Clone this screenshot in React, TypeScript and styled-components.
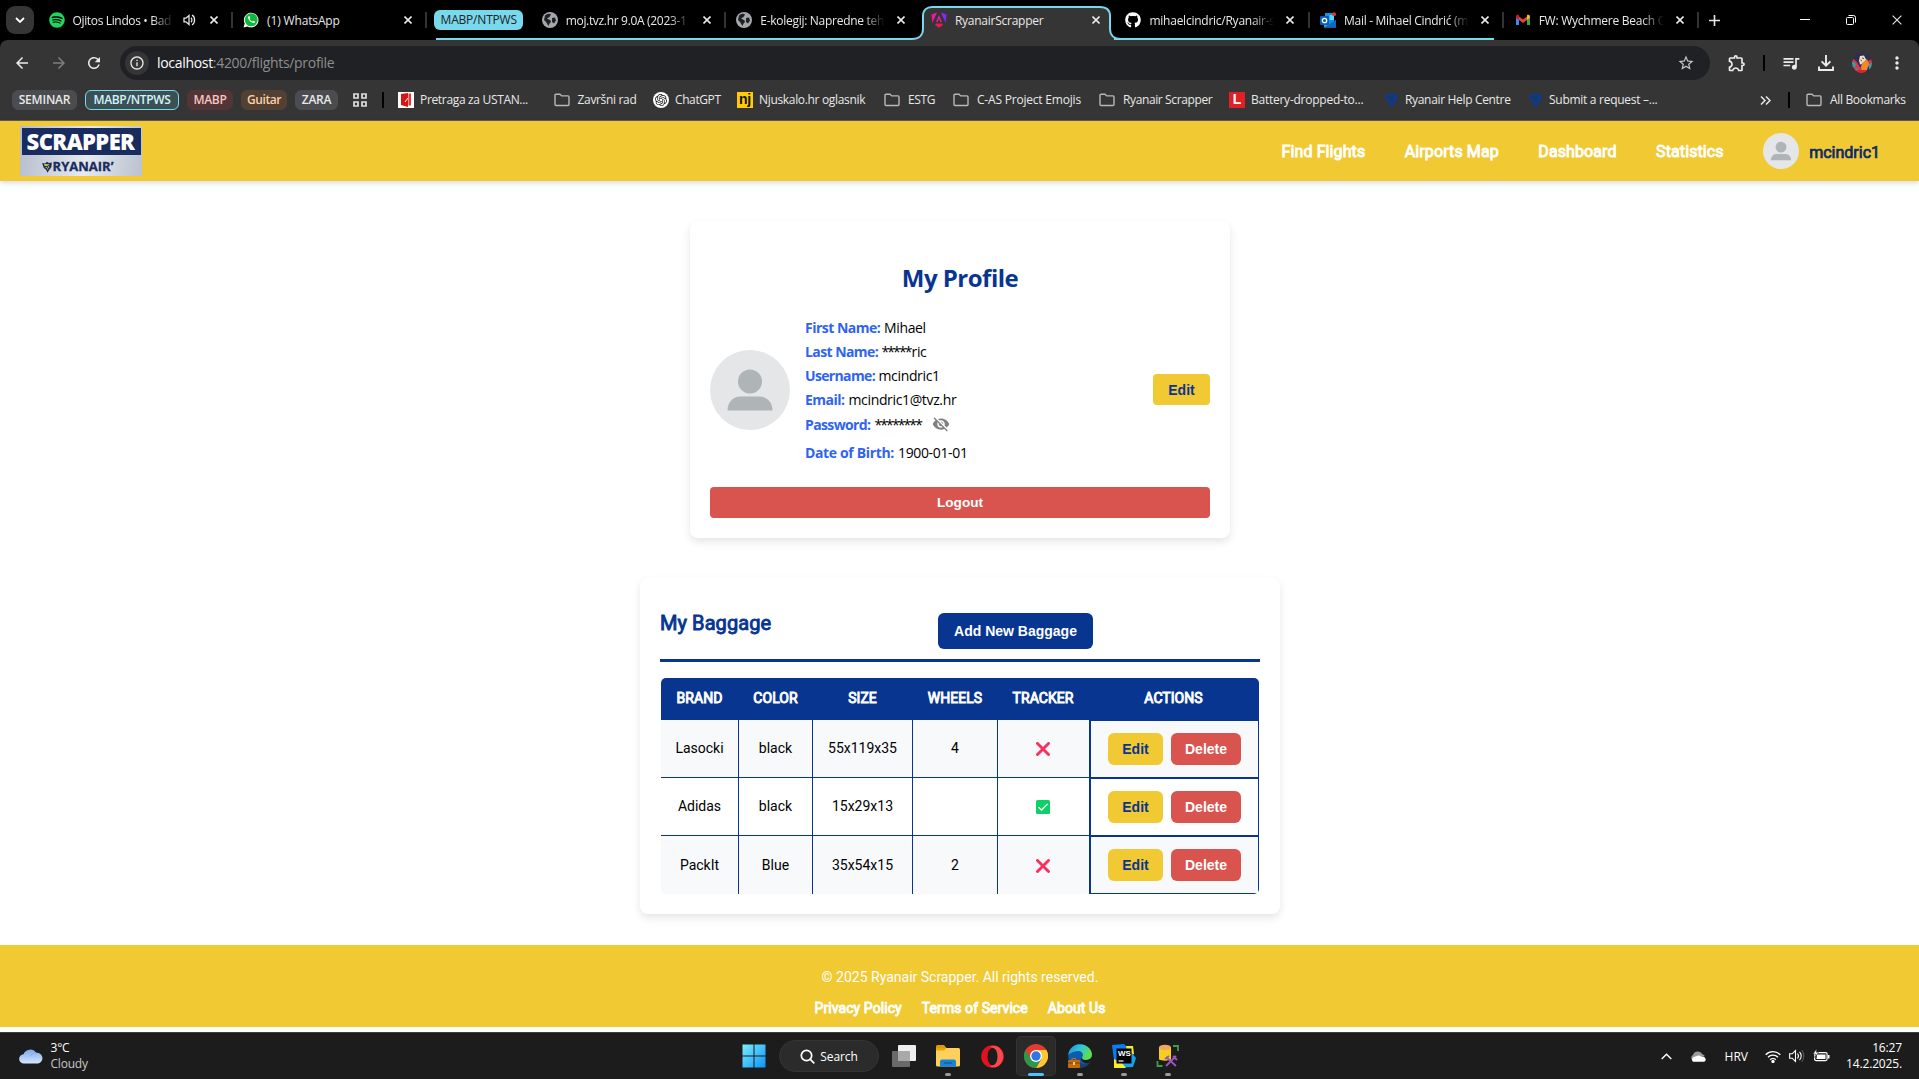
import React from "react";
import styled, { createGlobalStyle, css } from "styled-components";
import { FaSpotify, FaGithub } from "react-icons/fa6";
import {
  MdVisibilityOff, MdArrowBack, MdArrowForward, MdRefresh, MdStarOutline, MdOutlineExtension,
  MdQueueMusic, MdMoreVert, MdOutlineInfo,
} from "react-icons/md";
import { SiOpenai } from "react-icons/si";

const UI = `"Open Sans", "Noto Sans", sans-serif`;
const ROBOTO = `Roboto, "Liberation Sans", sans-serif`;
const ARIAL = `"Liberation Sans", Arial, sans-serif`;
const BLUE = "#073590";
const YELLOW = "#f1c933";
const RED = "#d9534f";
const CYAN = "#78d9ec";

const Global = createGlobalStyle`
  *, *::before, *::after { box-sizing: border-box; }
  html, body { margin: 0; padding: 0; background: #fff; overflow: hidden; }
  svg { display: block; flex: none; }
`;

const Screen = styled.div`
  width: 1919px;
  height: 1079px;
  display: flex;
  flex-direction: column;
  overflow: hidden;
  font-family: ${UI};
`;

/* ---------- Browser tabs ---------- */
const TabStrip = styled.div`
  height: 40px;
  flex: none;
  background: #000;
  display: flex;
  align-items: stretch;
`;
const TabSearch = styled.div`
  width: 28px;
  height: 28px;
  margin: 6px 3px 0 6px;
  border-radius: 9px;
  background: #353535;
  display: flex;
  align-items: center;
  justify-content: center;
`;
const TabBox = styled.div<{ $group?: boolean; $line?: number; $sep?: boolean }>`
  position: relative;
  width: 194.6px;
  flex: none;
  display: flex;
  align-items: center;
  padding-left: 11.5px;
  ${(p) => p.$group && css`
    background: linear-gradient(${CYAN}, ${CYAN}) left bottom / ${p.$line ?? 195}px 2px no-repeat;
  `}
  ${(p) => p.$sep && css`
    &::after {
      content: "";
      position: absolute;
      right: -1px;
      top: 12px;
      width: 2px;
      height: 16px;
      background: #333;
    }
  `}
`;
const TabIcon = styled.div`
  width: 16px;
  height: 16px;
  flex: none;
  position: relative;
`;
const TabTitle = styled.div<{ $w: number; $fade?: boolean; $ls?: number }>`
  position: relative;
  width: ${(p) => p.$w}px;
  margin-left: 8px;
  padding-top: 1px;
  overflow: hidden;
  white-space: nowrap;
  color: #e8e8e8;
  font-size: 12px;
  line-height: 18px;
  letter-spacing: ${(p) => p.$ls ?? -0.3}px;
  ${(p) => p.$fade && css`mask-image: linear-gradient(90deg, #000 calc(100% - 22px), transparent);`}
`;
const TabClose = styled.div`
  width: 16px;
  margin-left: 8px;
  position: relative;
  display: flex;
  justify-content: center;
`;
const GroupSlot = styled.div`
  width: 104px;
  flex: none;
  padding: 10px 7px 0 8px;
  background: linear-gradient(${CYAN}, ${CYAN}) right bottom / 94px 2px no-repeat;
`;
const GroupLabel = styled.div`
  height: 20px;
  border-radius: 6px;
  background: ${CYAN};
  color: #202124;
  font-size: 12px;
  line-height: 19px;
  letter-spacing: -0.2px;
  text-align: center;
`;
const ActiveShape = styled.svg`
  position: absolute;
  left: -7px;
  top: 5px;
`;
const NewTab = styled.div`
  width: 34px;
  display: flex;
  align-items: center;
  justify-content: center;
`;
const WindowButtons = styled.div`
  margin-left: auto;
  margin-right: -1px;
  display: flex;
  align-items: center;
`;
const WindowButton = styled.div`
  width: 46px;
  display: flex;
  justify-content: center;
`;

/* ---------- Toolbar ---------- */
const ChromeBody = styled.div`
  flex: none;
  height: 81px;
  background: #353535;
  border-radius: 8px 8px 0 0;
  border-bottom: 1px solid #5b5c5e;
`;
const ChromeBack = styled.div`
  background: #000;
  flex: none;
`;
const Toolbar = styled.div`
  height: 40px;
  padding-top: 6px;
  padding-left: 2px;
  display: flex;
`;
const ToolIcon = styled.div<{ $w: number; $dim?: boolean }>`
  width: ${(p) => p.$w}px;
  height: 34px;
  flex: none;
  display: flex;
  align-items: center;
  justify-content: center;
  font-size: 18px;
  color: ${(p) => (p.$dim ? "#7e7e7e" : "#ececec")};
`;
const Omnibox = styled.div`
  width: 1590px;
  height: 34px;
  border-radius: 17px;
  background: #202124;
  display: flex;
  align-items: center;
  padding: 0 15px 0 5px;
  color: #9aa0a6;
`;
const InfoDot = styled.div`
  width: 24px;
  height: 24px;
  border-radius: 50%;
  background: #353535;
  color: #e8e8e8;
  display: flex;
  align-items: center;
  justify-content: center;
  font-size: 16px;
  margin-right: 8px;
`;
const Url = styled.div`
  flex: 1;
  font-size: 14px;
  line-height: 20px;
  letter-spacing: -0.31px;
  color: #8e8e8e;
  b { font-weight: 400; color: #fff; }
`;
const Divider = styled.div<{ $ml?: number; $mr?: number }>`
  width: 2px;
  height: 16px;
  align-self: center;
  flex: none;
  background: #000;
  margin-left: ${(p) => p.$ml ?? 0}px;
  margin-right: ${(p) => p.$mr ?? 0}px;
`;

const Bookmarks = styled.div`
  height: 40px;
  display: flex;
  align-items: center;
  padding: 0 13px 0 12px;
`;
const Chip = styled.div<{ $w: number; $bg: string; $fg: string; $bd?: string; $ls?: number }>`
  width: ${(p) => p.$w}px;
  height: 20px;
  margin-right: 8px;
  flex: none;
  border-radius: 6px;
  border: 1px solid ${(p) => p.$bd ?? p.$bg};
  background: ${(p) => p.$bg};
  color: ${(p) => p.$fg};
  font-size: 12px;
  font-weight: 600;
  letter-spacing: ${(p) => p.$ls ?? -0.35}px;
  line-height: 17px;
  text-align: center;
  white-space: nowrap;
`;
const Bookmark = styled.div<{ $w: number; $ls?: number; $gap?: number }>`
  width: ${(p) => p.$w}px;
  flex: none;
  display: flex;
  align-items: center;
  gap: ${(p) => p.$gap ?? 7}px;
  color: #e8e8e8;
  font-size: 12px;
  line-height: 18px;
  letter-spacing: ${(p) => p.$ls ?? -0.33}px;
  white-space: nowrap;
`;
const Tile = styled.div<{ $bg: string; $fg: string }>`
  width: 16px;
  height: 16px;
  flex: none;
  background: ${(p) => p.$bg};
  color: ${(p) => p.$fg};
  font: 700 14px/14px ${ARIAL};
  text-align: center;
`;
const RoundTile = styled.div`
  width: 16px;
  height: 16px;
  border-radius: 50%;
  background: #fff;
  color: #222;
  display: flex;
  align-items: center;
  justify-content: center;
  font-size: 12px;
`;

/* ---------- Site header ---------- */
const faux = css`
  -webkit-text-stroke: 0.9px currentColor;
  font-weight: 400;
`;
const SiteHeader = styled.header`
  height: 60px;
  flex: none;
  background: ${YELLOW};
  box-shadow: 0 2px 5px rgba(0, 0, 0, 0.15);
  display: flex;
  align-items: center;
  padding: 0 39px 0 20px;
  font-family: ${ROBOTO};
  position: relative;
`;
const Logo = styled.div`
  width: 122px;
  height: 50px;
  padding: 2px 1px 1px 2px;
  background: linear-gradient(100deg, #b4bccb, #e6e9ee 55%, #bac2cf);
  display: flex;
  flex-direction: column;
`;
const LogoTop = styled.div`
  height: 27px;
  padding-right: 2px;
  background: #182c60;
  color: #fff;
  font: 800 22px/26px "Open Sans", sans-serif;
  letter-spacing: -0.6px;
  text-align: center;
`;
const LogoBottom = styled.div`
  flex: 1;
  display: flex;
  align-items: center;
  justify-content: center;
  padding-top: 3px;
  padding-right: 9px;
  color: #182c60;
  font: 700 13px/15px "Open Sans", sans-serif;
  -webkit-text-stroke: 0.3px #182c60;
`;
const Nav = styled.nav`
  margin-left: auto;
  display: flex;
  align-items: center;
  gap: 39.5px;
`;
const NavLink = styled.a`
  ${faux}
  color: #fff;
  font-size: 16px;
  line-height: 20px;
  padding-top: 2px;
  letter-spacing: 0.1px;
`;
const User = styled.div`
  display: flex;
  align-items: center;
  gap: 10px;
  color: #0b2a6b;
  font-size: 16px;
  span { -webkit-text-stroke: 0.7px currentColor; padding-top: 2px; }
`;

/* ---------- Page ---------- */
const Page = styled.main`
  flex: none;
  height: 764px;
  display: flex;
  flex-direction: column;
  align-items: center;
  padding: 40px 0 0 1px;
`;
const Card = styled.section<{ $w: number; $h: number }>`
  width: ${(p) => p.$w}px;
  height: ${(p) => p.$h}px;
  background: #fff;
  border-radius: 8px;
  padding: 20px;
  box-shadow: 0 4px 8px rgba(0, 0, 0, 0.1);
  margin-bottom: 40px;
  display: flex;
  flex-direction: column;
`;
const ProfileTitle = styled.h2`
  margin: 20px 0 0;
  color: ${BLUE};
  font: 700 24px/34px ${UI};
  letter-spacing: -0.5px;
  text-align: center;
`;
const ProfileRow = styled.div`
  margin-top: 20px;
  height: 150px;
  display: flex;
  align-items: center;
`;
const Fields = styled.div`
  flex: 1;
  margin-left: 15px;
  font-size: 14px;
  height: 150px;
`;
const Field = styled.div<{ $h?: number }>`
  height: ${(p) => p.$h ?? 24}px;
  display: flex;
  align-items: center;
  color: #000;
  letter-spacing: -0.35px;
  white-space: nowrap;
`;
const Label = styled.b<{ $w: number; $ls?: number }>`
  width: ${(p) => p.$w}px;
  color: #2f63f2;
  letter-spacing: ${(p) => p.$ls ?? -0.5}px;
`;
const Stars = styled.span<{ $mr?: number }>`
  letter-spacing: -1.9px;
  margin-right: ${(p) => p.$mr ?? 2}px;
`;
const Button = styled.button<{ $w: number; $h: number; $bg: string; $fg: string; $r?: number; $size?: number }>`
  width: ${(p) => p.$w}px;
  height: ${(p) => p.$h}px;
  flex: none;
  border: 0;
  padding: 0;
  border-radius: ${(p) => p.$r ?? 6}px;
  background: ${(p) => p.$bg};
  color: ${(p) => p.$fg};
  font: 700 ${(p) => p.$size ?? 14}px/16px ${ARIAL};
`;
const EditSlot = styled.div`
  padding-bottom: 1px;
`;
const LogoutWrap = styled.div`
  margin-top: 22px;
`;
const BagHeader = styled.div`
  height: 64px;
  border-bottom: 3px solid ${BLUE};
  display: flex;
  align-items: flex-start;
  padding-top: 15px;
  h2 {
    ${faux}
    margin: -3px 0 0;
    width: 278px;
    color: ${BLUE};
    font-family: ${ROBOTO};
    font-size: 20px;
    line-height: 26px;
    letter-spacing: 0.08px;
  }
`;
const Table = styled.div`
  margin: 16px 1px 0;
  border-radius: 5px;
  overflow: hidden;
  display: flex;
  flex-direction: column;
  font: 400 14px/18px ${ROBOTO};
  color: #000;
`;
const Row = styled.div<{ $odd?: boolean }>`
  display: grid;
  grid-template-columns: 78px 74px 100px 85px 91px 170px;
  height: 58px;
  background: ${(p) => (p.$odd ? "#f8f9fb" : "#fff")};
`;
const HeadRow = styled(Row)`
  height: 42px;
  background: ${BLUE};
  color: #fff;
`;
const HeadCell = styled.div`
  ${faux}
  display: flex;
  align-items: center;
  justify-content: center;
  padding: 0 1px 2px 0;
  letter-spacing: 0.05px;
`;
const Cell = styled.div<{ $last?: boolean; $noRight?: boolean }>`
  display: flex;
  align-items: center;
  justify-content: center;
  padding-bottom: ${(p) => (p.$last || p.$noRight ? 0 : 2)}px;
  border-right: ${(p) => (p.$noRight ? 0 : 1)}px solid ${BLUE};
  border-bottom: ${(p) => (p.$last ? 0 : 1)}px solid ${BLUE};
  svg { margin-right: 1px; margin-top: ${(p) => (p.$last ? 2 : 0)}px; }
`;
const ActionCell = styled.div`
  display: flex;
  gap: 8px;
  padding: 12px 0 0 17px;
  border: 1px solid ${BLUE};
  border-left-width: 2px;
`;

/* ---------- Footer ---------- */
const Footer = styled.footer`
  height: 82px;
  flex: none;
  background: ${YELLOW};
  color: #fff;
  font: 400 14px/20px ${ROBOTO};
  display: flex;
  flex-direction: column;
  align-items: center;
  padding-top: 22px;
  padding-left: 1px;
`;
const FooterLinks = styled.div`
  margin-top: 11px;
  display: flex;
  gap: 20px;
  a { ${faux} letter-spacing: 0.08px; }
`;

/* ---------- Taskbar ---------- */
const Taskbar = styled.div`
  margin-top: 5px;
  height: 47px;
  flex: none;
  background: #1c1c1c;
  border-top: 1px solid #3d3d3d;
  color: #fff;
  display: grid;
  grid-template-columns: 734px 460px 1fr;
`;
const Weather = styled.div`
  display: flex;
  align-items: center;
  padding-left: 19px;
  gap: 7.5px;
`;
const TwoLines = styled.div<{ $right?: boolean }>`
  font-size: 12px;
  line-height: 16px;
  letter-spacing: ${(p) => (p.$right ? -0.15 : -0.2)}px;
  text-align: ${(p) => (p.$right ? "right" : "left")};
  span { color: #c8c8c8; }
`;
const Apps = styled.div`
  display: flex;
  align-items: center;
`;
const AppSlot = styled.div<{ $active?: boolean }>`
  position: relative;
  width: 40px;
  height: 40px;
  margin-right: 4px;
  flex: none;
  border-radius: 5px;
  display: flex;
  align-items: center;
  justify-content: center;
  ${(p) => p.$active && css`
    background: #2a2a2a;
    box-shadow: inset 0 0 0 1px #343434;
  `}
`;
const Indicator = styled.i<{ $active?: boolean }>`
  position: absolute;
  bottom: 0;
  left: ${(p) => (p.$active ? 12 : 17)}px;
  width: ${(p) => (p.$active ? 16 : 6)}px;
  height: 3px;
  border-radius: 2px;
  background: ${(p) => (p.$active ? "#4cc2ff" : "#9a9a9a")};
`;
const SearchPill = styled.div`
  width: 100px;
  height: 32px;
  margin: 0 5px 0 1px;
  border-radius: 16px;
  background: #2b2b2b;
  border: 1px solid #343434;
  display: flex;
  align-items: center;
  justify-content: center;
  gap: 5px;
  font-size: 12px;
  letter-spacing: -0.1px;
`;
const Tray = styled.div`
  display: flex;
  align-items: center;
  justify-content: flex-end;
  padding-right: 17px;
`;
const TrayItem = styled.div<{ $mr: number }>`
  margin-right: ${(p) => p.$mr}px;
  font-size: 12px;
`;

/* ---------- Drawings ---------- */
const Cross = ({ s = 8, w = 1.6 }: { s?: number; w?: number }) => (
  <svg width={s} height={s} viewBox="0 0 8 8" fill="none" stroke="#e8e8e8" strokeWidth={w}>
    <path d="M.5.5l7 7M7.5.5l-7 7" />
  </svg>
);
const Avatar = ({ size }: { size: number }) => (
  <svg width={size} height={size} viewBox="0 0 80 80">
    <circle cx="40" cy="40" r="40" fill="#e4e6e7" />
    <circle cx="40" cy="31.500" r="12" fill="#afb4b6" />
    <path d="M17.500 60.500c0-8 5.500-14 13-14h19c7.500 0 13 6 13 14z" fill="#afb4b6" />
  </svg>
);
const Folder = () => (
  <svg width="16" height="16" viewBox="0 0 16 16" fill="none" stroke="#b8b8b8" strokeWidth="1.400">
    <path d="M1 3.200a1 1 0 0 1 1-1h4l1.700 1.700H14a1 1 0 0 1 1 1v7.600a1 1 0 0 1-1 1H2a1 1 0 0 1-1-1z" />
  </svg>
);
const Harp = ({ s, c, y }: { s: number; c: string; y: string }) => (
  <svg width={s} height={s} viewBox="0 0 16 16">
    <path d="M1.500 2.500l4 .8L8 1l2.500 1.500 4-.5-.8 6.500L11 12l-2.500 3.500L7 12 3.500 9z" fill={c} />
    <path d="M4 4.500l7 .5M4.500 6.500c3-1.500 6-.5 6 3M6 9c1.500-1 3-.5 3 2.500" stroke={y} fill="none" strokeWidth="1.200" />
  </svg>
);
const Speaker = () => (
  <svg width="13" height="12" viewBox="0 0 13 12" fill="none" stroke="#e8e8e8" strokeWidth="1.300">
    <path d="M1 4.200h2L6 1.500v9L3 7.800H1z" /><path d="M8 3.800c1.200 1 1.200 3.400 0 4.400M9 1.200c3.400 1.600 3.400 8 0 9.600" />
  </svg>
);
const Download = () => (
  <svg width="18" height="18" viewBox="0 0 18 18" fill="none" stroke="#ececec" strokeWidth="1.900">
    <path d="M9 1v10.500M4.600 7.400L9 11.700l4.400-4.300M2 12.500V16h14v-3.500" />
  </svg>
);
const WhatsApp = () => (
  <svg width="16" height="16" viewBox="0 0 16 16">
    <path d="M.5 15.500l1.200-4A7.300 7.300 0 1 1 4.500 14.400z" fill="#fff" />
    <circle cx="8.200" cy="7.800" r="6.500" fill="#12b83c" />
    <path d="M5.500 4.300c-1.200 1 .2 3.600 1.700 5s3.700 2.500 4.600 1.300c.5-.8.200-1.100-.2-1.300l-1.300-.6-.9.900c-1.300-.5-2.300-1.500-2.800-2.700l.7-.8-.6-1.600c-.2-.4-.8-.5-1.200-.2z" fill="#fff" />
  </svg>
);
const Angular = () => (
  <svg width="16" height="16" viewBox="0 0 16 16">
    <defs>
      <linearGradient id="ang" x1="0" y1="0" x2="1" y2="0">
        <stop offset="0" stopColor="#f5148a" /><stop offset=".5" stopColor="#d41ce0" /><stop offset="1" stopColor="#6a2bff" />
      </linearGradient>
    </defs>
    <path d="M6 .5L.5 2.500l.8 8.500zM10 .5l5.500 2-.8 8.500z" fill="url(#ang)" />
    <path d="M8 3l2.900 7H9.300L8 6.500 6.700 10H5.100z" fill="#e31fa8" />
    <path d="M5 11.500h6l1 1.400L8 15.800l-4-2.900z" fill="#f4144f" />
  </svg>
);
const Outlook = () => (
  <svg width="17" height="16" viewBox="0 0 17 16">
    <path d="M5 1h9v12H5z" fill="#1490df" /><path d="M9.500 3H14v5H9.500z" fill="#50d9ff" />
    <path d="M4 8l6 4 6-4v7.500H4z" fill="#28a8ea" /><path d="M4 15.500L16 8v7.500z" fill="#1067c2" />
    <rect x="0" y="4" width="9" height="9" rx="1" fill="#0a5cb8" />
    <circle cx="4.500" cy="8.500" r="2.200" fill="none" stroke="#fff" strokeWidth="1.300" />
    <circle cx="14" cy="2.300" r="2" fill="#e0383b" />
  </svg>
);
const Gmail = () => (
  <svg width="16" height="16" viewBox="0 0 16 16">
    <path d="M1 4v9h3V7z" fill="#4285f4" /><path d="M12 7v6h3V4z" fill="#34a853" />
    <path d="M4 4.500V8l4 3 4-3V4.500L8 7.500z" fill="#ea4335" />
    <path d="M1 4.500C1 2.500 3 2.300 4 3v5L1 5.700z" fill="#c5221f" />
    <path d="M15 4.500c0-2-2-2.200-3-1.500v5l3-2.300z" fill="#fbbc04" />
  </svg>
);
const BrowserAvatar = () => (
  <svg width="20" height="20" viewBox="0 0 20 20">
    <defs><clipPath id="av"><circle cx="10" cy="10" r="10" /></clipPath></defs>
    <g clipPath="url(#av)">
      <path d="M0 0h20v20H0z" fill="#2d2d55" />
      <path d="M0 5l4 3 4 6 5 2-4 5H3z" fill="#d8394a" /><path d="M14 9l6-3v5l-4 3z" fill="#d8394a" />
      <path d="M0 8l4 3-1 3-3 1zM17 11l3-1v5l-3 2zM3 15l3 1-1 3z" fill="#31a3a6" />
      <path d="M8 3l4-.5 2 4-2 4-4 1-1-4z" fill="#f1dfc8" />
      <path d="M10 10l5-4 2 5-2 6-5 1-1-4z" fill="#ef8a2c" /><path d="M4 17h11l-2 3H6z" fill="#d8262f" />
      <path d="M10 5l2 .5M8.500 7l1.500 1" stroke="#7a3f2a" strokeWidth="1" />
    </g>
  </svg>
);
const Cloud = () => (
  <svg width="24" height="16" viewBox="0 0 24 16">
    <defs>
      <linearGradient id="cl" x1="0" y1="0" x2="0" y2="1">
        <stop offset="0" stopColor="#7fa9ea" /><stop offset="1" stopColor="#d6e6fd" />
      </linearGradient>
    </defs>
    <path d="M5 15.500a4.600 4.600 0 0 1-.5-9.200A7 7 0 0 1 17 4.800a5.400 5.400 0 0 1 2 10.700z" fill="url(#cl)" />
    <path d="M11 8.500c1-2.500 4-4 6.500-3.500" stroke="#88aef0" fill="none" />
  </svg>
);
const StartIcon = () => (
  <svg width="24" height="24" viewBox="0 0 24 24">
    <defs>
      <linearGradient id="st" x1="0" y1="0" x2="24" y2="24" gradientUnits="userSpaceOnUse">
        <stop offset="0" stopColor="#7df0ff" /><stop offset="1" stopColor="#0a90f5" />
      </linearGradient>
    </defs>
    <path d="M.5.5h11v11H.5zM12.500.5h11v11h-11zM.5 12.500h11v11H.5zM12.500 12.500h11v11h-11z" fill="url(#st)" />
  </svg>
);
const TaskView = () => (
  <svg width="24" height="22" viewBox="0 0 24 22">
    <rect x="6" width="18" height="16" rx="1" fill="#eee" /><rect y="6" width="18" height="16" rx="1" fill="#6a6a6a" />
    <path d="M6 6h12v10H6z" fill="#a9a9a9" />
  </svg>
);
const Explorer = () => (
  <svg width="24" height="22" viewBox="0 0 24 22">
    <path d="M0 1.500A1.500 1.500 0 0 1 1.500 0H8l2.500 3v3H0z" fill="#e09b00" />
    <rect y="3" width="24" height="18.500" rx="1.500" fill="#ffd15c" />
    <path d="M0 5.500h8l2.500-2.500H10L8 3H0z" fill="#e8a80c" />
    <path d="M4 21.500V16.500A2 2 0 0 1 6 14.500h12a2 2 0 0 1 2 2v5z" fill="#1683d8" /><path d="M8 18h8" stroke="#0b5ea8" strokeWidth="1.500" />
  </svg>
);
const Opera = () => (
  <svg width="23" height="23" viewBox="0 0 23 23">
    <circle cx="11.500" cy="11.500" r="11.300" fill="#e0121f" />
    <path d="M9 1.500a11.300 11.300 0 0 1 0 20c3 1.500 7 1 9.500-1.500 5-5 5-12 0-17-2.500-2.500-6.500-3-9.500-1.500z" fill="#f64a4e" />
    <ellipse cx="11.500" cy="11.500" rx="5" ry="8.800" fill="#1c1c1c" />
  </svg>
);
const Chrome = () => (
  <svg width="24" height="24" viewBox="0 0 24 24">
    <circle cx="12" cy="12" r="12" fill="#e33b2e" />
    <path d="M12 24A12 12 0 0 0 22.400 6H12l5.200 9z" fill="#fcc934" />
    <path d="M1.600 6A12 12 0 0 0 12 24l5.200-9L12 12 6.800 15z" fill="#2a9a48" />
    <circle cx="12" cy="12" r="6" fill="#fff" /><circle cx="12" cy="12" r="4.700" fill="#2f74e8" />
  </svg>
);
const Edge = () => (
  <svg width="24" height="24" viewBox="0 0 24 24">
    <defs>
      <linearGradient id="ed" x1="0" y1="0" x2="1" y2=".4">
        <stop offset="0" stopColor="#1b8fd8" /><stop offset=".5" stopColor="#2fc3dd" /><stop offset="1" stopColor="#5fdf4a" />
      </linearGradient>
    </defs>
    <circle cx="12" cy="12" r="11.800" fill="#0d5cab" />
    <path d="M.3 11C1 4.500 6 .2 12 .2S24 5 24 10.500c0 3.500-3 5.500-6 5.500s-4-1-4-2 1-1.500 1-3c0-2-2-4-5-4-5 0-9 3-9.700 4z" fill="url(#ed)" />
    <path d="M9 13c0 6 6 8.500 13 5.500C20 22 15 24 11 23.500 8 21 7 16 9 13z" fill="#1c3f73" />
    <path d="M14 14c0 1.500 2 2.300 4 2 2.500 0 5-1 5.800-3l.2 3-3 3c-4 1-7-1-8.500-4z" fill="#1c1c1c" />
    <rect y="16" width="12" height="8" rx="1" fill="#c46a13" /><path d="M0 19h12" stroke="#7c3c06" /><path d="M5 18h2v3H5z" fill="#ffd15c" />
    <path d="M4 16v-1.500h4V16" stroke="#c46a13" fill="none" />
  </svg>
);
const WsText = styled.span`
  position: absolute;
  left: 13px;
  top: 13px;
  width: 15px;
  height: 14px;
  color: #fff;
  font: 700 8px/9px ${ARIAL};
  text-align: center;
`;
const WebStorm = () => (
  <svg width="24" height="24" viewBox="0 0 24 24">
    <path d="M0 1l12-1 5 5-9 14-6-3z" fill="#0a7cf5" /><path d="M14 2l7 0 1 8-6 3z" fill="#f5ee2f" />
    <path d="M19 8l5 6-3 9-15 .500z" fill="#12a5ee" /><path d="M2 15l8 4 4 5H2z" fill="#f5ee2f" />
    <rect x="4.500" y="4.500" width="15" height="15" fill="#000" /><path d="M6.500 17h5" stroke="#fff" strokeWidth="1.200" />
  </svg>
);
const DbTool = () => (
  <svg width="24" height="24" viewBox="0 0 24 24">
    <path d="M3 3v12.500c3 1.500 9 1.500 12 0V3z" fill="#f6cf1c" /><ellipse cx="9" cy="3.500" rx="6" ry="2.700" fill="#f0a860" />
    <path d="M17 2h5v5M1.500 17v5h5" stroke="#3f9b50" strokeWidth="1.800" fill="none" />
    <path d="M10 13l10 9M20 12L10 22M17 12l4 4M9 15l4-3" stroke="#9a55c0" strokeWidth="1.800" fill="none" />
  </svg>
);
const Globe = () => (
  <svg width="16" height="16" viewBox="0 0 16 16">
    <circle cx="8" cy="8" r="8" fill="#a4a8ad" />
    <path d="M3 3.500c2-2 5-2 6-1L7.500 5 5 6.500 8 8c1.500 1 1 2.500-.5 3.500L6.500 14 4 10 2 8zM10 6l3-.5 1 3-2 3-2-1.500z" fill="#202124" />
  </svg>
);

/* ---------- Data ---------- */
const bags = [
  { brand: "Lasocki", color: "black", size: "55x119x35", wheels: "4", tracker: false },
  { brand: "Adidas", color: "black", size: "15x29x13", wheels: "", tracker: true },
  { brand: "PackIt", color: "Blue", size: "35x54x15", wheels: "2", tracker: false },
];

interface TabProps {
  icon: React.ReactNode; title: string; group?: boolean; line?: number; sep?: boolean; fade?: boolean; audio?: boolean; ls?: number; active?: boolean;
}
const Tab = ({ icon, title, group, line, sep, fade, audio, ls, active }: TabProps) => (
  <TabBox $group={group} $line={line} $sep={sep}>
    {active && (
      <ActiveShape width="210" height="35" viewBox="0 0 210 35">
        <path d="M0 35V34C7 34 11 30 11 24V11C11 5 15 2 20 2H188C194 2 198 5 198 11V24C198 30 202 34 209 34V35Z" fill="#353535" />
        <path d="M0 34C7 34 11 30 11 24V11C11 5 15 2 20 2H188C194 2 198 5 198 11V24C198 30 202 34 209 34" fill="none" stroke={CYAN} strokeWidth="2" />
      </ActiveShape>
    )}
    <TabIcon>{icon}</TabIcon>
    <TabTitle $w={audio ? 101 : 125} $fade={fade} $ls={ls}>{title}</TabTitle>
    {audio && <TabClose><Speaker /></TabClose>}
    <TabClose><Cross /></TabClose>
  </TabBox>
);

const Tracker = ({ on }: { on: boolean }) =>
  on ? (
    <svg width="14" height="14" viewBox="0 0 14 14">
      <rect width="14" height="14" rx="1.500" fill="#0bd167" />
      <path d="M2.500 7.200l3 2.800 6-6" fill="none" stroke="#fff" strokeWidth="1.400" />
    </svg>
  ) : (
    <svg width="14" height="14" viewBox="0 0 14 14">
      <path d="M1.500 1.500l11 11M12.500 1.500l-11 11" stroke="#f92f60" strokeWidth="2.900" strokeLinecap="round" />
    </svg>
  );

export default function App() {
  return (
    <Screen>
      <Global />
      <TabStrip>
        <TabSearch>
          <svg width="10" height="6" viewBox="0 0 10 6" fill="none" stroke="#fff" strokeWidth="1.800"><path d="M1 1l4 4 4-4" /></svg>
        </TabSearch>
        <Tab icon={<FaSpotify size={16} color="#1ed760" />} title="Ojitos Lindos • Bad" sep fade audio ls={-0.35} />
        <Tab icon={<WhatsApp />} title="(1) WhatsApp" sep ls={-0.15} />
        <GroupSlot><GroupLabel>MABP/NTPWS</GroupLabel></GroupSlot>
        <Tab icon={<Globe />} title="moj.tvz.hr 9.0A (2023-1" group sep fade ls={-0.32} />
        <Tab icon={<Globe />} title="E-kolegij: Napredne teh" group fade ls={-0.28} />
        <Tab icon={<Angular />} title="RyanairScrapper" group active ls={-0.25} />
        <Tab icon={<FaGithub size={16} color="#fff" />} title="mihaelcindric/Ryanair-s" group sep fade ls={-0.25} />
        <Tab icon={<Outlook />} title="Mail - Mihael Cindrić (m" group line={185} sep fade />
        <Tab icon={<Gmail />} title="FW: Wychmere Beach C" sep fade ls={-0.25} />
        <NewTab>
          <svg width="11" height="11" viewBox="0 0 11 11" stroke="#e8e8e8" strokeWidth="1.600"><path d="M5.500 0v11M0 5.500h11" /></svg>
        </NewTab>
        <WindowButtons>
          <WindowButton><svg width="10" height="10" viewBox="0 0 10 10" stroke="#fff"><path d="M0 4.500h10" /></svg></WindowButton>
          <WindowButton>
            <svg width="10" height="10" viewBox="0 0 10 10" fill="none" stroke="#fff"><rect x=".5" y="2.500" width="7" height="7" rx="1" /><path d="M2.500.5h5a2 2 0 0 1 2 2v5" /></svg>
          </WindowButton>
          <WindowButton><Cross s={10} w={0.9} /></WindowButton>
        </WindowButtons>
      </TabStrip>
      <ChromeBack>
        <ChromeBody>
          <Toolbar>
            <ToolIcon $w={40}><MdArrowBack /></ToolIcon>
            <ToolIcon $w={33} $dim><MdArrowForward /></ToolIcon>
            <ToolIcon $w={38}><MdRefresh /></ToolIcon>
            <ToolIcon $w={7} />
            <Omnibox>
              <InfoDot><MdOutlineInfo /></InfoDot>
              <Url><b>localhost</b>:4200/flights/profile</Url>
              <MdStarOutline size={18} color="#c8c8c8" />
            </Omnibox>
            <ToolIcon $w={54}><MdOutlineExtension size={20} /></ToolIcon>
            <Divider $ml={-1} $mr={8} />
            <ToolIcon $w={35}><MdQueueMusic size={20} /></ToolIcon>
            <ToolIcon $w={36}><Download /></ToolIcon>
            <ToolIcon $w={36}><BrowserAvatar /></ToolIcon>
            <ToolIcon $w={34}><MdMoreVert size={20} /></ToolIcon>
          </Toolbar>
          <Bookmarks>
            <Chip $w={65} $bg="#4b4c4f" $fg="#e8e8e8" $ls={-0.2}>SEMINAR</Chip>
            <Chip $w={94} $bg="#3b5055" $fg="#d3f3fa" $bd={CYAN}>MABP/NTPWS</Chip>
            <Chip $w={46} $bg="#523536" $fg="#f6c5c1">MABP</Chip>
            <Chip $w={46} $bg="#524133" $fg="#fbd0a8" $ls={-0.4}>Guitar</Chip>
            <Chip $w={43} $bg="#4b4c4f" $fg="#e8e8e8" $ls={-0.2}>ZARA</Chip>
            <ToolIcon $w={28}>
              <svg width="14" height="14" viewBox="0 0 14 14" fill="none" stroke="#e0e0e0" strokeWidth="1.700">
                <path d="M1 1h4v4H1zM9 1h4v4H9zM1 9h4v4H1zM9 9h4v4H9z" />
              </svg>
            </ToolIcon>
            <Divider $ml={8} $mr={14} />
            <Bookmark $w={156} $gap={6}>
              <svg width="16" height="16" viewBox="0 0 16 16"><path d="M0 0h16v16H0z" fill="#fff" /><path d="M3 2l7-1v14l-7-2z" fill="#d81414" /><path d="M10.500 1.500H13v12h-2.500z" fill="#e33" /><path d="M7 10l3-4" stroke="#fff" /></svg>
              Pretraga za USTAN...
            </Bookmark>
            <Bookmark $w={99} $gap={7.5}><Folder />Završni rad</Bookmark>
            <Bookmark $w={84} $gap={6} $ls={-0.4}><RoundTile><SiOpenai /></RoundTile>ChatGPT</Bookmark>
            <Bookmark $w={147} $gap={6}><Tile $bg="#ffcb05" $fg="#111">nj</Tile>Njuskalo.hr oglasnik</Bookmark>
            <Bookmark $w={69} $gap={8}><Folder />ESTG</Bookmark>
            <Bookmark $w={146} $gap={8} $ls={-0.2}><Folder />C-AS Project Emojis</Bookmark>
            <Bookmark $w={130} $gap={8} $ls={-0.38}><Folder />Ryanair Scrapper</Bookmark>
            <Bookmark $w={154} $gap={6} $ls={-0.25}><Tile $bg="#e31f26" $fg="#fff">L</Tile>Battery-dropped-to...</Bookmark>
            <Bookmark $w={144} $gap={6}><Harp s={16} c="#0d3a94" y="#24345a" />Ryanair Help Centre</Bookmark>
            <Bookmark $w={233} $gap={6} $ls={-0.28}><Harp s={16} c="#0d3a94" y="#24345a" />Submit a request –...</Bookmark>
            <svg width="11" height="9" viewBox="0 0 11 9" fill="none" stroke="#e8e8e8" strokeWidth="1.500"><path d="M1 .5l4 4-4 4M6 .5l4 4-4 4" /></svg>
            <Divider $ml={17} $mr={16} />
            <Bookmark $w={100} $gap={8}><Folder />All Bookmarks</Bookmark>
          </Bookmarks>
        </ChromeBody>
      </ChromeBack>

      <SiteHeader>
        <Logo>
          <LogoTop>SCRAPPER</LogoTop>
          <LogoBottom><Harp s={12} c="#182c60" y="#e6d23c" />RYANAIR’</LogoBottom>
        </Logo>
        <Nav>
          <NavLink>Find Flights</NavLink>
          <NavLink>Airports Map</NavLink>
          <NavLink>Dashboard</NavLink>
          <NavLink>Statistics</NavLink>
          <User><Avatar size={36} /><span>mcindric1</span></User>
        </Nav>
      </SiteHeader>

      <Page>
        <Card $w={540} $h={317}>
          <ProfileTitle>My Profile</ProfileTitle>
          <ProfileRow>
            <Avatar size={80} />
            <Fields>
              <Field><Label $w={79}>First Name:</Label>Mihael</Field>
              <Field><Label $w={76.5} $ls={-0.58}>Last Name:</Label><Stars $mr={1}>*****</Stars>ric</Field>
              <Field><Label $w={73.5} $ls={-0.65}>Username:</Label>mcindric1</Field>
              <Field><Label $w={43.5}>Email:</Label>mcindric1@tvz.hr</Field>
              <Field $h={26}><Label $w={69.5} $ls={-0.62}>Password:</Label><Stars $mr={11}>********</Stars><MdVisibilityOff size={18} color="#808080" /></Field>
              <Field $h={30}><Label $w={93} $ls={-0.35}>Date of Birth:</Label>1900-01-01</Field>
            </Fields>
            <EditSlot><Button $w={57} $h={31} $bg={YELLOW} $fg={BLUE} $r={4}>Edit</Button></EditSlot>
          </ProfileRow>
          <LogoutWrap>
            <Button $w={500} $h={31} $bg={RED} $fg="#fff" $r={4} $size={13.6}>Logout</Button>
          </LogoutWrap>
        </Card>

        <Card $w={640} $h={337}>
          <BagHeader>
            <h2>My Baggage</h2>
            <Button $w={155} $h={36} $bg={BLUE} $fg="#fff">Add New Baggage</Button>
          </BagHeader>
          <Table>
            <HeadRow>
              {["BRAND", "COLOR", "SIZE", "WHEELS", "TRACKER", "ACTIONS"].map((h) => <HeadCell key={h}>{h}</HeadCell>)}
            </HeadRow>
            {bags.map((b, i) => {
              const last = i === bags.length - 1;
              return (
                <Row key={b.brand} $odd={i % 2 === 0}>
                  <Cell $last={last}>{b.brand}</Cell>
                  <Cell $last={last}>{b.color}</Cell>
                  <Cell $last={last}>{b.size}</Cell>
                  <Cell $last={last}>{b.wheels}</Cell>
                  <Cell $last={last} $noRight><Tracker on={b.tracker} /></Cell>
                  <ActionCell>
                    <Button $w={55} $h={32} $bg={YELLOW} $fg={BLUE}>Edit</Button>
                    <Button $w={70} $h={32} $bg={RED} $fg="#fff">Delete</Button>
                  </ActionCell>
                </Row>
              );
            })}
          </Table>
        </Card>
      </Page>

      <Footer>
        <div>© 2025 Ryanair Scrapper. All rights reserved.</div>
        <FooterLinks><a>Privacy Policy</a><a>Terms of Service</a><a>About Us</a></FooterLinks>
      </Footer>

      <Taskbar>
        <Weather>
          <Cloud />
          <TwoLines>3°C<br /><span>Cloudy</span></TwoLines>
        </Weather>
        <Apps>
          <AppSlot><StartIcon /></AppSlot>
          <SearchPill>
            <svg width="15" height="15" viewBox="0 0 15 15" fill="none" stroke="#fff" strokeWidth="1.700"><circle cx="6.500" cy="6.500" r="5.200" /><path d="M10.300 10.300l4 4" /></svg>
            Search
          </SearchPill>
          <AppSlot><TaskView /></AppSlot>
          <AppSlot><Explorer /><Indicator /></AppSlot>
          <AppSlot><Opera /></AppSlot>
          <AppSlot $active><Chrome /><Indicator $active /></AppSlot>
          <AppSlot><Edge /><Indicator /></AppSlot>
          <AppSlot><WebStorm /><WsText>WS</WsText><Indicator /></AppSlot>
          <AppSlot><DbTool /><Indicator /></AppSlot>
        </Apps>
        <Tray>
          <TrayItem $mr={18}><svg width="11" height="7" viewBox="0 0 11 7" fill="none" stroke="#fff" strokeWidth="1.400"><path d="M.7 6l4.800-4.800L10.300 6" /></svg></TrayItem>
          <TrayItem $mr={18}>
            <svg width="17" height="11" viewBox="0 0 17 11"><path d="M3 9.500A3 3 0 0 1 3 4a5 5 0 0 1 9-1.200L15 5z" fill="#9a9a9a" /><path d="M3 10.800A2.800 2.800 0 0 1 4 6l4-1.500A4 4 0 0 1 12 6a2.500 2.500 0 0 1 2 4.800z" fill="#fff" /></svg>
          </TrayItem>
          <TrayItem $mr={17}>HRV</TrayItem>
          <TrayItem $mr={8}>
            <svg width="16" height="13" viewBox="0 0 16 13" fill="none" stroke="#fff" strokeWidth="1.300"><path d="M.7 4.700a10.300 10.300 0 0 1 14.600 0M3 7.300a7 7 0 0 1 10 0M5.200 9.700a4 4 0 0 1 5.600 0" /><circle cx="8" cy="11.500" r="1" fill="#fff" /></svg>
          </TrayItem>
          <TrayItem $mr={8}>
            <svg width="16" height="14" viewBox="0 0 16 14" fill="none" stroke="#fff" strokeWidth="1.100"><path d="M.6 4.800h2.600L6.500 1.500v11L3.200 9.200H.6zM8.500 4.500a4 4 0 0 1 0 5M10.500 2.800a6 6 0 0 1 0 8.400" /><path d="M12.700 1.200a9 9 0 0 1 0 11.600" stroke="#555" /></svg>
          </TrayItem>
          <TrayItem $mr={16}>
            <svg width="17" height="14" viewBox="0 0 17 14"><rect x="1.600" y="3.600" width="12.500" height="8" rx="1.500" fill="none" stroke="#fff" strokeWidth="1.200" /><path d="M4 5.500h8.500v4.500H3.500zM15 6h1.500v3.500H15z" fill="#fff" /><path d="M3.500 0L0 5h2.500L1.500 8.500 5.500 3.500H3.500z" fill="#fff" stroke="#1c1c1c" strokeWidth=".5" /></svg>
          </TrayItem>
          <TwoLines $right>16:27<br />14.2.2025.</TwoLines>
        </Tray>
      </Taskbar>
    </Screen>
  );
}
